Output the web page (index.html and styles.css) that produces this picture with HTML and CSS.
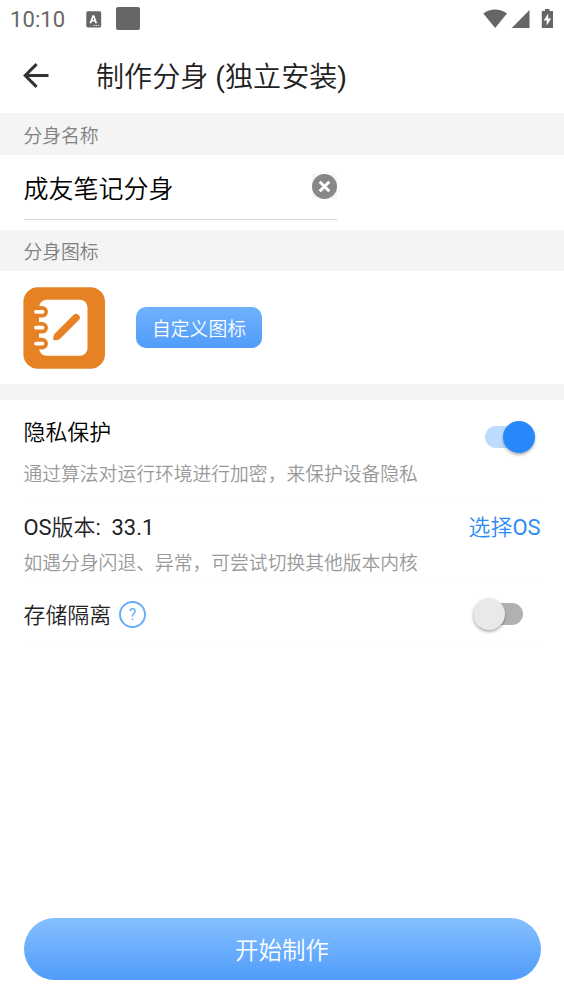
FILE: index.html
```html
<!DOCTYPE html>
<html lang="zh-CN">
<head>
<meta charset="utf-8">
<title>制作分身</title>
<link rel="stylesheet" href="styles.css">
</head>
<body>
<div class="screen">
  <header class="status">
    <span class="clock">10:10</span>
    <svg class="status-input" width="16" height="17" viewBox="0 0 16 17"><rect x="0.3" y="0.2" width="14.9" height="16.2" rx="1.6" fill="#666"/><path d="M3.500 12.300 6.400 4.200h1.900l2.900 8.100H9.300l-.6-1.800H6l-.6 1.800zM6.500 9h1.700l-.85-2.600z" fill="#fff"/><path d="M7.500 14.500h6" stroke="#ddd" stroke-dasharray="1.4 .7"/></svg>
    <span class="status-block"></span>
    <svg class="status-right" width="72" height="20" viewBox="0 0 72 20"><path d="M.3 4.600C7-.9 17.300-.9 24 4.600L12.200 19z" fill="#666"/><path d="M28.800 19 46.500 1v18z" fill="#666"/><path d="M62 0h4.500v2H70v17H58.800V2H62z" fill="#666"/><path d="M65.200 4.500 60.700 11.500h3v5l4.500-7h-3z" fill="#fff"/></svg>
  </header>
  <div class="titlebar">
    <svg class="back" width="26" height="26" viewBox="0 0 26 26" fill="none" stroke="#333" stroke-width="3"><path d="M25.500 12.500H3M13.600 1.100 2.200 12.500l11.400 11.400"/></svg>
    <h1 class="title">制作分身 (独立安装)</h1>
  </div>
  <div class="label label-name"><span>分身名称</span></div>
  <div class="name-section">
    <div class="field">
      <span class="field-text">成友笔记分身</span>
      <svg class="clear" width="25" height="25" viewBox="0 0 25 25"><path fill="#f5f5f5" d="M0 0h25v25H0z"/><circle cx="12.500" cy="12.500" r="12.500" fill="#888"/><path d="m7.700 7.700 9.600 9.600m0-9.600-9.600 9.600" stroke="#fff" stroke-width="3"/></svg>
    </div>
  </div>
  <div class="label label-icon"><span>分身图标</span></div>
  <div class="icon-section">
    <svg class="app-icon" width="82" height="82" viewBox="0 0 82 82"><rect x=".4" y=".2" width="81.600" height="81.600" rx="14.500" fill="#e78224"/><rect x="16" y="12.700" width="48.500" height="56" rx="7.500" fill="#fff"/><g fill="#e78224"><path d="M9 19h10.200a5.800 5.800 0 0 1 0 11.600H9zM9 35h10.200a5.800 5.800 0 0 1 0 11.600H9zM9 50.800h10.200a5.800 5.800 0 0 1 0 11.600H9z"/><path d="M50.400 28.100a3.700 3.700 0 0 1 5.300 5.200L36.600 52.300Q34 53.700 30.300 53.100q-.3-3.500 1.100-6z"/></g><path d="M12.900 24.800h6.600M12.900 40.700h6.600M12.900 56.600h6.600" stroke="#fff" stroke-width="3.700" stroke-linecap="round"/></svg>
    <button class="custom" type="button"><span>自定义图标</span></button>
  </div>
  <div class="gap"></div>
  <main class="settings">
    <section class="row privacy">
      <div class="copy"><div class="name">隐私保护</div><div class="desc">通过算法对运行环境进行加密，来保护设备隐私</div></div>
      <span class="switch switch-on"><i class="thumb"></i></span>
    </section>
    <section class="row os">
      <div class="copy"><div class="name">OS版本:&nbsp; 33.1</div><div class="desc">如遇分身闪退、异常，可尝试切换其他版本内核</div></div>
      <a class="choose">选择OS</a>
    </section>
    <section class="row storage">
      <div class="name">存储隔离</div><span class="help">?</span>
      <span class="switch switch-off"><i class="thumb"></i></span>
    </section>
  </main>
  <button class="start" type="button"><span>开始制作</span></button>
</div>
</body>
</html>
```

FILE: styles.css
```css
* { box-sizing: border-box; }
body { margin: 0; background: #fff; font-family: Roboto, "Noto Sans CJK SC DemiLight", "Noto Sans CJK SC Light", "Noto Sans CJK SC", sans-serif; }
button { border: 0; padding: 0; font-family: inherit; color: #fff; }
.screen { width: 564px; height: 1004px; display: flex; flex-direction: column; overflow: hidden; }
.status { height: 38px; flex: none; display: flex; align-items: center; padding: 0 9px 0 10px; color: #666; }
.clock { width: 76px; font-size: 22px; line-height: 38px; letter-spacing: .1px; padding-top: 1px; }
.status-block { width: 24px; height: 23px; margin: 0 0 1px 14px; border-radius: 2px; background: #666; }
.status-right { margin: 0 0 1px auto; }
.titlebar { height: 75px; flex: none; display: flex; align-items: center; padding-left: 23px; }
.title { margin: 4px 0 0 47px; font-size: 28.100px; font-weight: 400; line-height: 40px; color: #212121; }
.label { flex: none; padding-left: 23.500px; background: #f4f4f4; color: #808080; font-size: 18.790px; }
.label-name { height: 42px; line-height: 43px; padding-top: 3px; }
.label-icon { height: 41px; line-height: 41px; padding-top: 3px; }
.name-section { height: 75px; flex: none; padding-left: 23.500px; }
.field { width: 313.500px; height: 65px; display: flex; align-items: center; justify-content: space-between; border-bottom: 1px solid #d4d4d4; }
.field-text { padding-top: 6px; font-size: 25px; line-height: 58px; color: #000; }
.clear { margin-bottom: 1px; }
.icon-section { height: 113px; flex: none; display: flex; align-items: center; padding-left: 23px; }
.custom { width: 126px; height: 41px; margin-left: 31px; padding-top: 6px; border-radius: 10px; background: linear-gradient(#6fb1fe, #519dfa); font-size: 18.790px; line-height: 35px; }
.gap { height: 16px; flex: none; background: #f4f4f4; }
.settings { padding: 0 23.500px; flex: none; }
.row { display: flex; border-bottom: 1px solid #fafafa; }
.copy { flex: 1; }
.name { font-size: 21.920px; line-height: 30px; color: #222; }
.desc { font-size: 18.790px; line-height: 26px; color: #999; white-space: nowrap; }
.privacy { height: 102px; padding-top: 18px; }
.privacy .name { color: #000; }
.privacy .desc { margin-top: 14px; }
.os { height: 81px; padding-top: 11px; }
.os .desc { margin-top: 8px; }
.choose { font-size: 21.920px; line-height: 30px; color: #2b8cf7; }
.storage { height: 62px; align-items: center; }
.storage .name { padding-top: 5px; }
.help { width: 27px; height: 27px; margin: 1px 0 0 8px; border: 2px solid #66adfc; border-radius: 50%; color: #66adfc; font-size: 16px; line-height: 24px; text-align: center; }
.switch { display: flex; align-items: center; width: 50px; height: 22px; border-radius: 11px; flex: none; }
.thumb { width: 32px; height: 32px; flex: none; border-radius: 50%; box-shadow: 0 2px 3px rgba(0,0,0,.3); }
.switch-on { margin: 8px 5.500px 0 0; justify-content: flex-end; background: #bcdbfe; }
.switch-on .thumb { background: #2688fa; }
.switch-off { margin: 1px 17.500px 0 auto; background: #b1b1b1; }
.switch-off .thumb { background: #e9e9e9; }
.start { width: 517px; height: 62px; margin: auto 0 24px 23.500px; padding-top: 4px; flex: none; border-radius: 31px; background: linear-gradient(#85c0ff, #509cfa); font-size: 23.490px; line-height: 58px; }
```
